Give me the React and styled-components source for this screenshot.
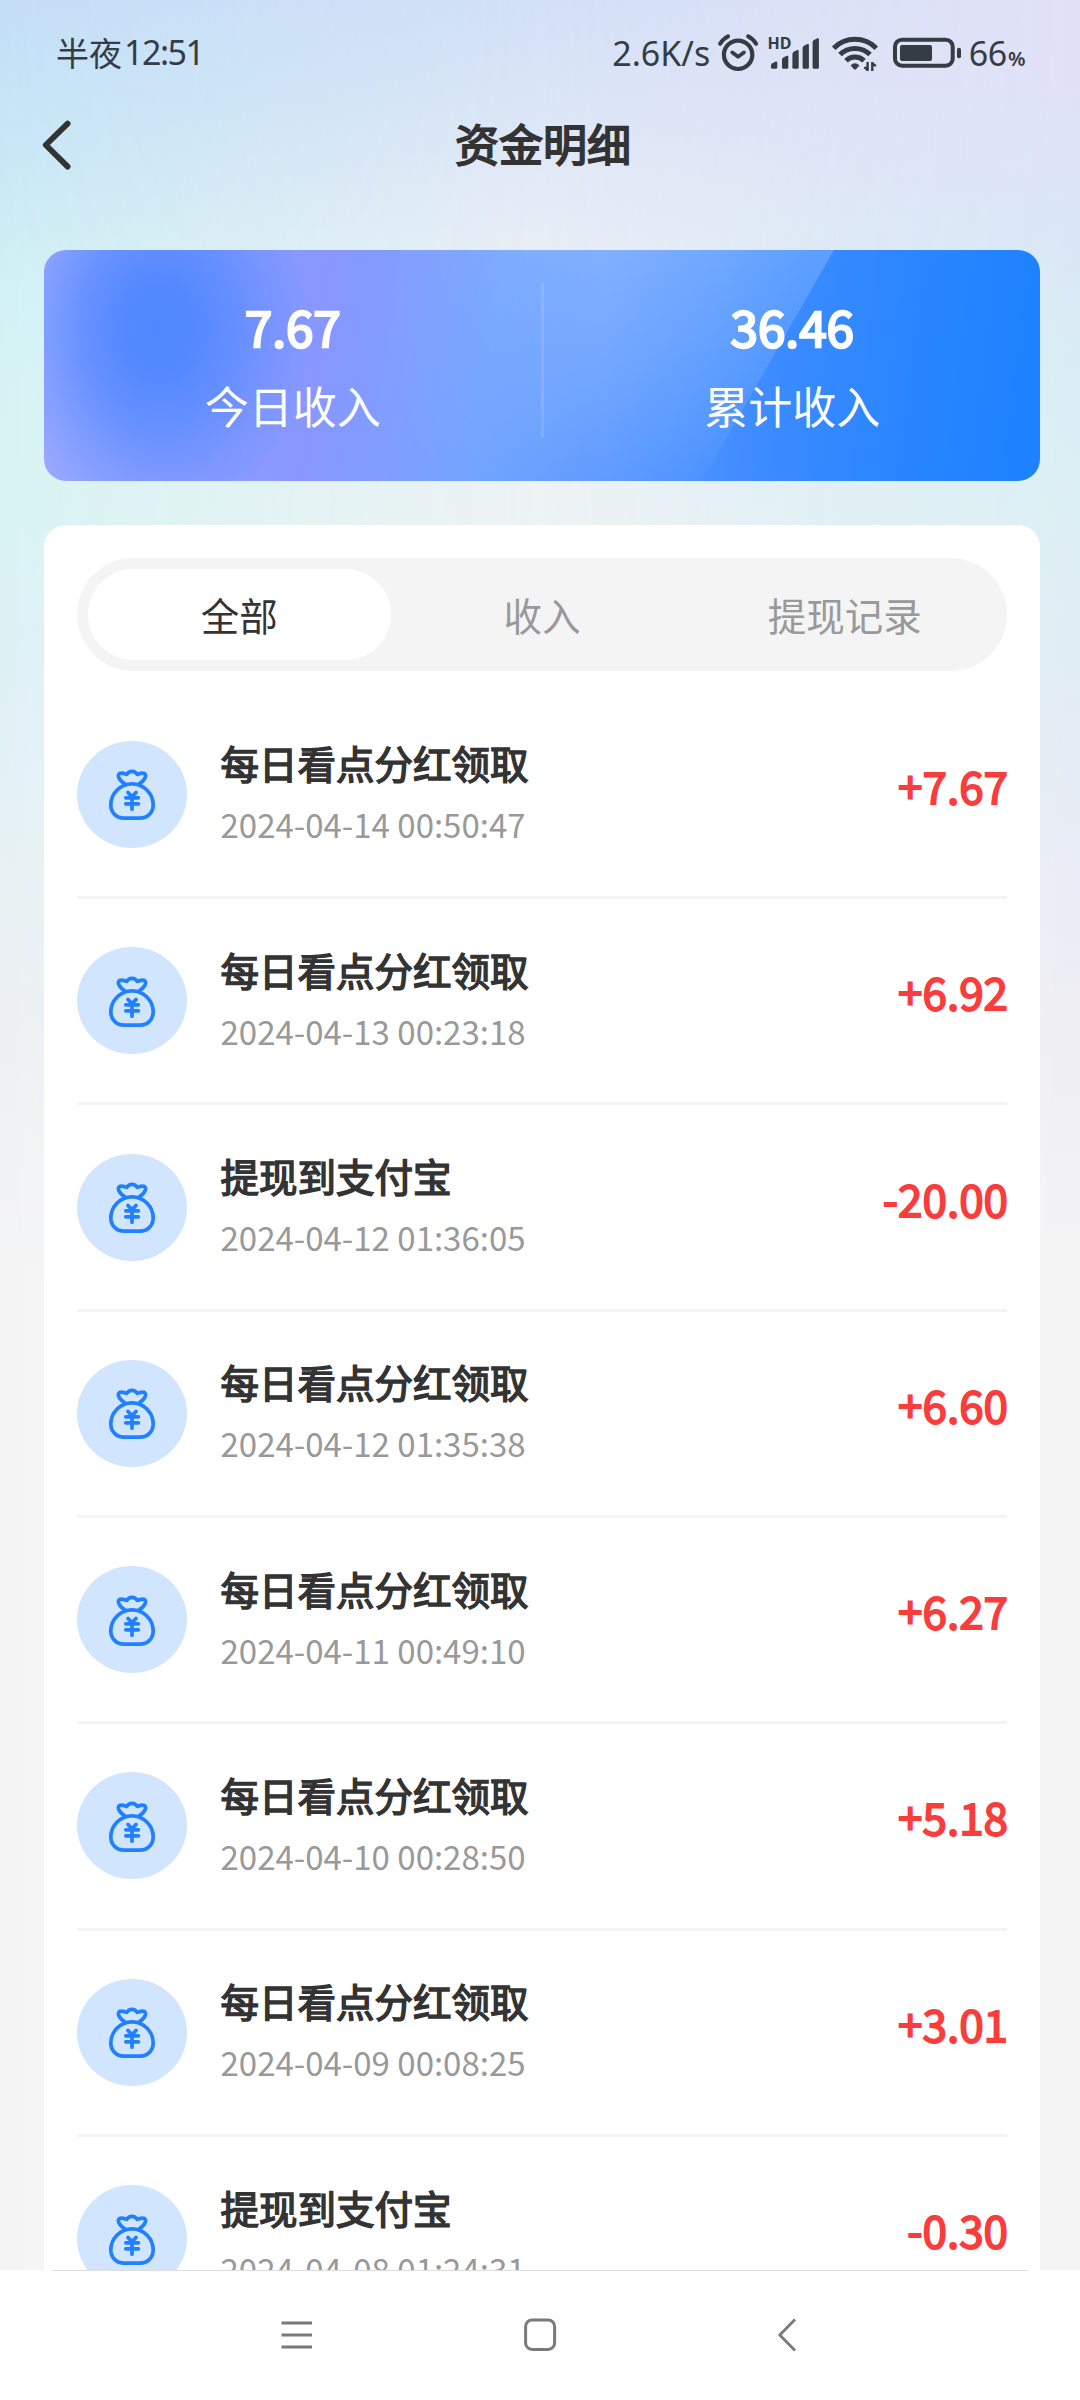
import React from "react";
import styled, { createGlobalStyle } from "styled-components";

const GlobalStyle = createGlobalStyle`
  html, body { margin: 0; padding: 0; background: #f4f4f4; }
  * { box-sizing: border-box; }
  body { font-family: "Noto Sans CJK SC", "Noto Sans", sans-serif; }
`;

const Screen = styled.div`
  width: 1080px;
  height: 2400px;
  overflow: hidden;
  display: flex;
  flex-direction: column;
  position: relative;
  isolation: isolate;
  background: linear-gradient(
    to bottom,
    #d3e1f8 0, #dbe6f6 100px, #e4eaf6 180px, #e8eef7 240px,
    #eef3f5 500px, #f0f3f6 700px, #f4f4f4 1300px
  );

  &::before,
  &::after {
    content: "";
    position: absolute;
    inset: 0;
    z-index: -1;
  }

  &::before {
    background: linear-gradient(
      to bottom,
      #c4def6 0, #c5e4f6 100px, #cae9f5 180px, #d2f1f4 290px, #d6f3f4 400px,
      #d9f3f2 520px, #def1f5 650px, #e4f1f6 780px, #e9f1f3 900px,
      #ecf0f3 1000px, #f1f2f4 1150px, #f4f4f4 1300px
    );
    mask-image: linear-gradient(to right, #000 0, #000a 180px, transparent 540px);
  }

  &::after {
    background: linear-gradient(
      to bottom,
      #e0e1f6 0, #e1e1f6 70px, #dee4f6 140px, #dae7f6 240px, #d9eef5 400px,
      #dceff4 520px, #e0edf5 650px, #e6ecf5 760px, #eaedf7 900px,
      #eeeef3 1000px, #f2f2f4 1180px, #f4f4f4 1300px
    );
    mask-image: linear-gradient(to left, #000 0, #000b 240px, transparent 540px);
  }
`;

const StatusBar = styled.header`
  height: 96px;
  flex: none;
  display: flex;
  align-items: center;
  justify-content: space-between;
  padding: 9px 55px 0 56px;
  color: #353c44;
  font-family: "Noto Sans", "Noto Sans CJK SC", sans-serif;
  font-size: 34px;
  line-height: 48px;
`;

const Clock = styled.div`
  display: flex;
  align-items: center;
  padding-bottom: 1px;
`;

const ClockPeriod = styled.span`
  font-family: "Noto Sans CJK SC", sans-serif;
  font-size: 33px;
`;

const ClockTime = styled.span`
  margin-left: 2px;
  letter-spacing: -1.5px;
`;

const StatusItems = styled.div`
  display: flex;
  align-items: center;
`;

const StatusIcon = styled.svg`
  display: block;
  flex: none;
  overflow: visible;
  margin-left: ${(p) => p.$gap}px;
`;

const Percent = styled.span`
  display: flex;
  align-items: baseline;
  padding-top: 1px;
  margin-left: 7px;
  letter-spacing: -0.4px;
`;

const PercentSign = styled.small`
  font-size: 20px;
  line-height: 1;
  font-weight: 600;
  margin-left: 1px;
`;

const HdLabel = styled.text`
  font: 700 16px "Noto Sans", sans-serif;
  fill: #353c44;
`;

const TitleBar = styled.div`
  height: 97px;
  flex: none;
  display: grid;
  grid-template-columns: 110px 1fr 104px;
  align-items: center;
`;

const BackButton = styled.button`
  border: 0;
  background: none;
  padding: 0 0 0 40px;
  display: flex;
`;

const Title = styled.h1`
  margin: 0;
  padding-bottom: 4px;
  text-align: center;
  font-size: 44px;
  line-height: 60px;
  font-weight: 400;
  color: #333;
  -webkit-text-stroke: 1.8px #333;
`;

const Content = styled.main`
  flex: 1;
  min-height: 0;
  overflow: hidden;
  padding: 57px 40px 0 44px;
  display: flex;
  flex-direction: column;
  gap: 44px;
`;

const Summary = styled.section`
  flex: none;
  height: 231px;
  border-radius: 22px;
  overflow: hidden;
  position: relative;
  isolation: isolate;
  display: grid;
  grid-template-columns: 1fr 3px 1fr;
  align-items: center;
  background:
    radial-gradient(ellipse 155px 200px at 114px 78px, #5087ff 0, #5087fff0 22%, #5087ffa8 50%, #5087ff48 76%, #5087ff00 100%),
    linear-gradient(97deg,
      #9aabff 0, #8f9fff 16%, #8897ff 28%, #7f9dff 36%, #6ea2ff 45%,
      #5c98ff 55%, #4c92ff 65%, #3a8aff 74%, #2a86ff 86%, #1e82ff 97%);

  &::before {
    content: "";
    position: absolute;
    inset: 0;
    z-index: -1;
    clip-path: polygon(356px 0, 790px 0, 658px 231px, 320px 231px);
    background: linear-gradient(165deg, #ffffff48 15%, #ffffff26 55%, #ffffff00 88%);
    mask-image: linear-gradient(to right, #0001 340px, #0005 440px, #000 560px);
  }
`;

const Stat = styled.div`
  display: flex;
  flex-direction: column;
  align-items: center;
  color: #fff;
  padding: 0 0 3px 1px;
`;

const StatValue = styled.strong`
  font-size: 49.5px;
  line-height: 72px;
  font-weight: 400;
  -webkit-text-stroke: 2.4px #fff;
`;

const StatLabel = styled.span`
  font-size: 44px;
  line-height: 66px;
  margin-top: 10px;
`;

const StatDivider = styled.i`
  height: 154px;
  margin-bottom: 11px;
  background: rgba(255, 255, 255, 0.12);
`;

const Panel = styled.section`
  flex: 1;
  min-height: 0;
  overflow: hidden;
  background: #fff;
  border-radius: 22px 22px 0 0;
  padding: 33px 33px 0;
`;

const Tabs = styled.nav`
  height: 113px;
  border-radius: 57px;
  background: #f4f4f4;
  padding: 11px;
  display: grid;
  grid-template-columns: repeat(3, 1fr);
`;

const Tab = styled.button`
  border: 0;
  border-radius: 46px;
  padding: 0 0 2px;
  font-family: inherit;
  font-size: 38.5px;
  line-height: 56px;
  color: ${(p) => (p.$active ? "#333" : "#999")};
  background: ${(p) => (p.$active ? "#fff" : "transparent")};
`;

const List = styled.ul`
  list-style: none;
  margin: 21.7px 0 0;
  padding: 0;
`;

const Row = styled.li`
  height: 206.33px;
  display: flex;
  align-items: center;
  border-bottom: 3px solid #f4f4f4;
`;

const Badge = styled.div`
  width: 110px;
  height: 107px;
  flex: none;
  border-radius: 50%;
  background: #d1e5ff;
  display: flex;
  align-items: center;
  justify-content: center;
  padding-top: 2px;
`;

const Info = styled.div`
  flex: 1;
  margin-left: 33.5px;
  padding-bottom: 6px;
  display: flex;
  flex-direction: column;
`;

const Name = styled.div`
  font-size: 38.5px;
  line-height: 58px;
  color: #333;
  -webkit-text-stroke: 1.5px #333;
`;

const Time = styled.div`
  font-size: 33px;
  line-height: 50px;
  margin-top: 8px;
  color: #999;
`;

const Amount = styled.div`
  font-size: 44px;
  line-height: 64px;
  margin-bottom: 19px;
  margin-right: -1px;
  color: #f93d3d;
  -webkit-text-stroke: 1.8px #f93d3d;
`;

const NavBar = styled.footer`
  flex: none;
  height: 130px;
  background: #fefefe;
  display: flex;
  flex-direction: column;
  align-items: center;
`;

const NavLine = styled.i`
  width: 976px;
  height: 1px;
  background: #dedede;
`;

const NavKeys = styled.div`
  width: 100%;
  height: 128px;
  display: flex;
  align-items: center;
  padding-left: 280px;
`;

const NavKey = styled.svg`
  display: block;
  flex: none;
  margin-right: ${(p) => p.$after}px;
`;

function AlarmIcon() {
  return (
    <StatusIcon $gap={8} width="40" height="38" viewBox="716.5 33 40 38" fill="none" stroke="#353c44" strokeLinecap="round" strokeLinejoin="round">
      <circle cx="736.6" cy="53.8" r="14.2" strokeWidth="4.2" />
      <path d="M730.8 51.5 L736.6 55.8 L742.4 51.5" strokeWidth="3.8" />
      <path d="M718.6 42.8 Q721.5 37.8 726.6 35.4 M754.6 42.8 Q751.7 37.8 746.6 35.4" strokeWidth="4" />
    </StatusIcon>
  );
}

function SignalIcon() {
  const bars = [
    [769, 60.5], [780, 54.8], [790.4, 49], [800.6, 43], [810.6, 37.3],
  ];
  return (
    <StatusIcon $gap={10.5} width="50" height="38" viewBox="767 33 50 38">
      <HdLabel x="765.6" y="48.3">HD</HdLabel>
      {bars.map(([x, y]) => (
        <path
          key={x}
          fill="#353c44"
          d={`M${x} ${y + 4} Q${x} ${y + 2.6} ${x + 1.4} ${y + 1.8} L${x + 4.8} ${y} Q${x + 6.3} ${y - 0.4} ${x + 6.3} ${y + 1} V66.3 Q${x + 6.3} 67.8 ${x + 4.8} 67.8 H${x + 1.5} Q${x} 67.8 ${x} 66.3 Z`}
        />
      ))}
    </StatusIcon>
  );
}

function WifiIcon() {
  return (
    <StatusIcon $gap={13} width="46" height="38" viewBox="830 33 46 38" fill="none" stroke="#353c44" strokeWidth="5">
      <path d="M831.7 47.2 A30 30 0 0 1 874.3 47.2" />
      <path d="M838 53.6 A21.2 21.2 0 0 1 868 53.6" />
      <path d="M844 59.8 A12.8 12.8 0 0 1 862 59.8" />
      <path d="M848.6 64.6 Q853 60 857.4 64.6 L854 68.2 Q853 69 852 68.2 Z" fill="#353c44" stroke="none" />
      <path d="M865.6 61 V70 M865.6 69 L862.4 66.2 M870.3 70 V61 M870.3 62.4 L873.8 65" strokeWidth="2.4" />
    </StatusIcon>
  );
}

function BatteryIcon() {
  return (
    <StatusIcon $gap={15} width="69" height="38" viewBox="891 33 69 38">
      <rect x="893" y="38.7" width="57.7" height="26" rx="7" fill="none" stroke="#353c44" strokeWidth="4" />
      <rect x="898" y="44" width="32" height="16" rx="2" fill="#353c44" />
      <rect x="955" y="46.7" width="4" height="10.6" rx="2" fill="#353c44" />
    </StatusIcon>
  );
}

function MoneyBagIcon() {
  return (
    <svg width="50" height="54" viewBox="0 0 50 54" fill="none" stroke="#2080ff" strokeWidth="3.7" strokeLinecap="round" strokeLinejoin="round">
      <path d="M25 15.8 C13 15.8 3.8 26 3.8 37 C3.8 44.5 9.5 50.2 17 50.2 H33 C40.5 50.2 46.2 44.5 46.2 37 C46.2 26 37 15.8 25 15.8 Z" />
      <path d="M17.6 15.6 C13.6 13.4 10.4 9 11.7 6.4 C13.1 3.8 16.6 5.4 19.8 6.4 C21.2 4 23 3.3 25 3.3 C27 3.3 28.8 4 30.2 6.4 C33.4 5.4 36.9 3.8 38.3 6.4 C39.6 9 36.4 13.4 32.4 15.6" />
      <path d="M21 24.4 L25 28.8 L29 24.4 M18.8 29.8 H31.4 M18.8 35.8 H31.4 M25 29 V41.2" />
    </svg>
  );
}

const RECORDS = [
  ["每日看点分红领取", "2024-04-14 00:50:47", "+7.67"],
  ["每日看点分红领取", "2024-04-13 00:23:18", "+6.92"],
  ["提现到支付宝", "2024-04-12 01:36:05", "-20.00"],
  ["每日看点分红领取", "2024-04-12 01:35:38", "+6.60"],
  ["每日看点分红领取", "2024-04-11 00:49:10", "+6.27"],
  ["每日看点分红领取", "2024-04-10 00:28:50", "+5.18"],
  ["每日看点分红领取", "2024-04-09 00:08:25", "+3.01"],
  ["提现到支付宝", "2024-04-08 01:24:31", "-0.30"],
];

export default function App() {
  return (
    <>
      <GlobalStyle />
      <Screen>
        <StatusBar>
          <Clock>
            <ClockPeriod>半夜</ClockPeriod>
            <ClockTime>12:51</ClockTime>
          </Clock>
          <StatusItems>
            <span>2.6K/s</span>
            <AlarmIcon />
            <SignalIcon />
            <WifiIcon />
            <BatteryIcon />
            <Percent>
              66<PercentSign>%</PercentSign>
            </Percent>
          </StatusItems>
        </StatusBar>

        <TitleBar>
          <BackButton aria-label="返回">
            <svg width="34" height="52" viewBox="0 0 34 52" fill="none" stroke="#333" strokeWidth="5.8" strokeLinecap="round" strokeLinejoin="round">
              <path d="M27.6 4.6 L5.8 26 L27.6 47.6" />
            </svg>
          </BackButton>
          <Title>资金明细</Title>
        </TitleBar>

        <Content>
          <Summary>
            <Stat>
              <StatValue>7.67</StatValue>
              <StatLabel>今日收入</StatLabel>
            </Stat>
            <StatDivider />
            <Stat>
              <StatValue>36.46</StatValue>
              <StatLabel>累计收入</StatLabel>
            </Stat>
          </Summary>

          <Panel>
            <Tabs>
              <Tab $active>全部</Tab>
              <Tab>收入</Tab>
              <Tab>提现记录</Tab>
            </Tabs>
            <List>
              {RECORDS.map(([name, time, amount]) => (
                <Row key={time}>
                  <Badge>
                    <MoneyBagIcon />
                  </Badge>
                  <Info>
                    <Name>{name}</Name>
                    <Time>{time}</Time>
                  </Info>
                  <Amount>{amount}</Amount>
                </Row>
              ))}
            </List>
          </Panel>
        </Content>

        <NavBar>
          <NavLine />
          <NavKeys>
            <NavKey $after={211} width="33" height="34" viewBox="0 0 33 34" stroke="#7a7a7a" strokeWidth="2.8">
              <path d="M1.5 5 H32 M1.5 17 H32 M1.5 29 H32" />
            </NavKey>
            <NavKey $after={220} width="34" height="34" viewBox="0 0 34 34" fill="none" stroke="#7a7a7a" strokeWidth="3">
              <rect x="1.6" y="2" width="29" height="29.4" rx="6.5" />
            </NavKey>
            <NavKey $after={0} width="20" height="34" viewBox="0 0 20 34" fill="none" stroke="#7a7a7a" strokeWidth="2.8" strokeLinejoin="round">
              <path d="M17 1.5 L1.8 17 L17 32.5" />
            </NavKey>
          </NavKeys>
        </NavBar>
      </Screen>
    </>
  );
}
